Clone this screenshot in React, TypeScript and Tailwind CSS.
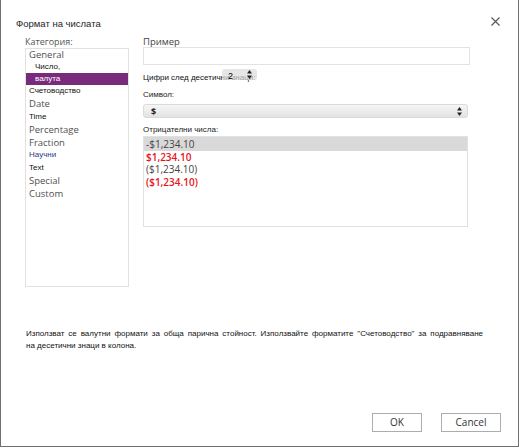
import React from "react";

const categories: { label: string; kind: "big" | "small"; h: string; selected?: boolean; indent?: boolean; tone?: string }[] = [
  { label: "General", kind: "big", h: "h-[11px]" },
  { label: "Число,", kind: "small", h: "h-[13px]", indent: true },
  { label: "валута", kind: "small", h: "h-[12px]", indent: true, selected: true },
  { label: "Счетоводство", kind: "small", h: "h-[12.5px]" },
  { label: "Date", kind: "big", h: "h-[13px]" },
  { label: "Time", kind: "small", h: "h-[13px]" },
  { label: "Percentage", kind: "big", h: "h-[13px]" },
  { label: "Fraction", kind: "big", h: "h-[12.5px]" },
  { label: "Научни", kind: "small", h: "h-[12.5px]", tone: "text-[#2b3d86]" },
  { label: "Text", kind: "small", h: "h-[12.5px]" },
  { label: "Special", kind: "big", h: "h-[13px]" },
  { label: "Custom", kind: "big", h: "h-[12.5px]" },
];

const negatives = [
  { text: "-$1,234.10", red: false },
  { text: "$1,234.10", red: true },
  { text: "($1,234.10)", red: false },
  { text: "($1,234.10)", red: true },
];

const UpDown = () => (
  <svg width="5" height="9" viewBox="0 0 5 9">
    <path d="M2.5 0 L5 3.5 L0 3.5 Z" fill="#222" />
    <path d="M2.5 9 L5 5.5 L0 5.5 Z" fill="#222" />
  </svg>
);

export default function App() {
  return (
    <div className="w-[520px] h-[448px] bg-white font-['Open_Sans',sans-serif]">
      <div className="w-[519px] h-[447px] border-l border-r border-b border-[#6f6f6f] flex flex-col">
        {/* header */}
        <div className="flex justify-between items-start pl-[15px] pr-[18px] mt-[17px] h-[14px]">
          <span className="font-['Liberation_Sans',sans-serif] text-[9.5px] leading-[14px] text-[#1e1e1e]">
            Формат на числата
          </span>
          <svg width="9" height="9" viewBox="0 0 9 9" className="mt-[0px]">
            <path d="M0.5 0.5 L8.5 8.5 M8.5 0.5 L0.5 8.5" stroke="#555" strokeWidth="1.1" />
          </svg>
        </div>

        {/* body */}
        <div className="flex pl-[24px] gap-[14px]">
          {/* categories */}
          <div className="w-[104px] flex flex-col">
            <span className="mt-[5px] h-[12px] leading-[12px] text-[9px] text-[#555]">Категория:</span>
            <div className="h-[239px] border border-[#e1e1e1] flex flex-col">
              {categories.map((c) => (
                <div
                  key={c.label}
                  className={`${c.h} flex items-center ${c.selected ? "bg-[#7a2a7d] text-white" : ""} ${
                    c.indent ? "pl-[9px]" : "pl-[3px]"
                  }`}
                >
                  {c.kind === "big" ? (
                    <span className="text-[9.5px] text-[#505050] leading-none">{c.label}</span>
                  ) : (
                    <span
                      className={`font-['Liberation_Sans',sans-serif] text-[8px] leading-none ${
                        c.selected ? "text-white" : c.tone ?? "text-[#111]"
                      }`}
                    >
                      {c.label}
                    </span>
                  )}
                </div>
              ))}
            </div>
          </div>

          {/* right side */}
          <div className="w-[327px] flex flex-col">
            <span className="mt-[6px] h-[10px] leading-[10px] text-[9.5px] text-[#444]">Пример</span>
            <div className="h-[18px] border border-[#e3e3e3]" />

            <div className="relative h-[14px] mt-[4px] font-['Liberation_Sans',sans-serif] text-[8px] text-[#111]">
              <span className="block mt-[2px] leading-[14px]">Цифри след десетични знаци:</span>
              <div className="absolute top-0 left-[79px] w-[35px] h-[11px] rounded-[3px] bg-[#dcdcdc]/70 flex items-center justify-between pl-[6px] pr-[5px]">
                <span className="text-[9px] leading-none text-black mt-[3px]">2</span>
                <UpDown />
              </div>
            </div>

            <span className="mt-[7px] h-[10px] leading-[10px] font-['Liberation_Sans',sans-serif] text-[8px] text-[#222]">
              Символ:
            </span>
            <div className="mt-[4px] w-[325px] h-[14px] rounded-[3px] border border-[#dadada] bg-gradient-to-b from-[#f6f6f6] to-[#e3e3e3] flex items-center justify-between pl-[7px] pr-[5px]">
              <span className="text-[9px] font-bold leading-none text-[#222]">$</span>
              <UpDown />
            </div>

            <span className="mt-[7px] h-[10px] leading-[10px] font-['Liberation_Sans',sans-serif] text-[8px] text-[#222]">
              Отрицателни числа:
            </span>
            <div className="mt-[1px] w-[325px] h-[91px] border border-[#e1e1e1] flex flex-col">
              {negatives.map((n, i) => (
                <div
                  key={i}
                  className={`${i === 0 ? "h-[13.5px] bg-[#d9d9d9]" : "h-[12.5px]"} flex items-center pl-[2px]`}
                >
                  <span
                    className={`text-[10px] leading-none ${n.red ? "text-[#e8141c] font-semibold" : "text-[#444]"}`}
                  >
                    {n.text}
                  </span>
                </div>
              ))}
            </div>
          </div>
        </div>

        {/* description */}
        <div className="mt-[41px] ml-[25px] w-[457px] font-['Liberation_Sans',sans-serif] text-[8px] leading-[12px] text-[#111]">
          <p className="text-justify [text-align-last:justify]">
            Използват се валутни формати за обща парична стойност. Използвайте форматите "Счетоводство" за подравняване
          </p>
          <p>на десетични знаци в колона.</p>
        </div>

        {/* buttons */}
        <div className="mt-auto mb-[14px] flex justify-end gap-[19px] pr-[17px]">
          <button className="w-[50px] h-[19px] border border-[#adadad] bg-white text-[10px] text-[#333]">OK</button>
          <button className="w-[60px] h-[19px] border border-[#adadad] bg-white text-[10px] text-[#333]">Cancel</button>
        </div>
      </div>
    </div>
  );
}
